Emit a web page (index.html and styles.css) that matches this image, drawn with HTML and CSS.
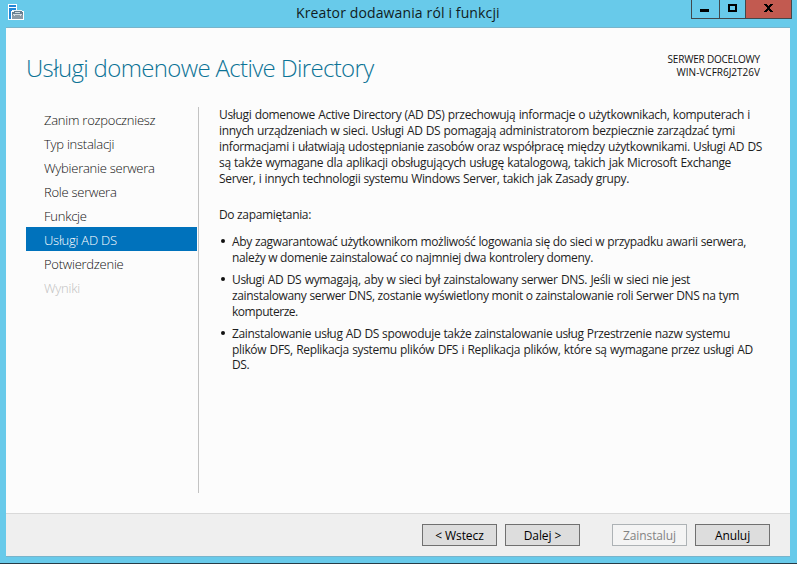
FILE: index.html
```
<!DOCTYPE html>
<html lang="pl">
<head>
<meta charset="utf-8">
<title>Kreator dodawania ról i funkcji</title>
<link rel="stylesheet" href="styles.css">
</head>
<body>
<div class="window">
  <header class="titlebar">
    <svg class="app-icon" width="16" height="16" viewBox="0 0 16 16" shape-rendering="crispEdges">
      <path fill="#fff" d="M0 0h9v6h5v1h2v9H0z"/>
      <path fill="#2287d8" d="M1 1h7v2H1zM1 4h7v2H4v1H3v8H1z"/>
      <path fill="#e8f3f8" d="M5 6h9v1H5z"/>
      <path fill="#687f91" d="M6 7h8v1H6zM4 8h11v7H4z"/>
      <path fill="#8b9aa6" d="M4 11h11v4H4z"/>
      <path fill="#d5dde2" d="M7 8h5v1H7zM5 10h9v1H5zM6 11h1v1H6zM12 11h1v1h-1z"/>
    </svg>
    <h1 class="caption">Kreator dodawania ról i funkcji</h1>
    <div class="controls">
      <svg class="control" width="28" height="18" viewBox="0 0 28 18" shape-rendering="crispEdges"><path d="M8 9h10v3H8z"/></svg>
      <svg class="control" width="26" height="18" viewBox="0 0 26 18" shape-rendering="crispEdges"><path fill-rule="evenodd" d="M8 4h10v8H8zM10 6v4h6V6z"/></svg>
      <svg class="control close" width="45" height="18" viewBox="0 0 45 18" shape-rendering="crispEdges"><path d="M18 4h3v1h1v1h1V5h1V4h3v1h-1v1h-1v1h-1v2h1v1h1v1h1v1h-3v-1h-1v-1h-1v1h-1v1h-3v-1h1v-1h1V9h1V7h-1V6h-1V5h-1z"/></svg>
    </div>
  </header>
  <main class="client">
    <div class="heading">
      <h2 class="page-title">Usługi domenowe Active Directory</h2>
      <div class="target">
        <div class="target-label">SERWER DOCELOWY</div>
        <div class="target-name">WIN-VCFR6J2T26V</div>
      </div>
    </div>
    <div class="body">
      <nav class="steps">
        <div class="step">Zanim rozpoczniesz</div>
        <div class="step">Typ instalacji</div>
        <div class="step">Wybieranie serwera</div>
        <div class="step">Role serwera</div>
        <div class="step">Funkcje</div>
        <div class="step active">Usługi AD DS</div>
        <div class="step">Potwierdzenie</div>
        <div class="step disabled">Wyniki</div>
      </nav>
      <section class="info">
        <p class="intro">
          <span class="line a1">Usługi domenowe Active Directory (AD DS) przechowują informacje o użytkownikach, komputerach i</span>
          <span class="line a2">innych urządzeniach w sieci. Usługi AD DS pomagają administratorom bezpiecznie zarządzać tymi</span>
          <span class="line a3">informacjami i ułatwiają udostępnianie zasobów oraz współpracę między użytkownikami. Usługi AD DS</span>
          <span class="line a4">są także wymagane dla aplikacji obsługujących usługę katalogową, takich jak Microsoft Exchange</span>
          <span class="line a5">Server, i innych technologii systemu Windows Server, takich jak Zasady grupy.</span>
        </p>
        <p class="remember"><span class="line a6">Do zapamiętania:</span></p>
        <ul class="notes">
          <li>
            <span class="line b1">Aby zagwarantować użytkownikom możliwość logowania się do sieci w przypadku awarii serwera,</span>
            <span class="line b2">należy w domenie zainstalować co najmniej dwa kontrolery domeny.</span>
          </li>
          <li>
            <span class="line b3">Usługi AD DS wymagają, aby w sieci był zainstalowany serwer DNS. Jeśli w sieci nie jest</span>
            <span class="line b4">zainstalowany serwer DNS, zostanie wyświetlony monit o zainstalowanie roli Serwer DNS na tym</span>
            <span class="line b5">komputerze.</span>
          </li>
          <li class="last">
            <span class="line b6">Zainstalowanie usług AD DS spowoduje także zainstalowanie usług Przestrzenie nazw systemu</span>
            <span class="line b7">plików DFS, Replikacja systemu plików DFS i Replikacja plików, które są wymagane przez usługi AD</span>
            <span class="line b8">DS.</span>
          </li>
        </ul>
      </section>
    </div>
    <footer class="actions">
      <button class="btn">&lt; Wstecz</button>
      <button class="btn">Dalej &gt;</button>
      <button class="btn install" disabled>Zainstaluj</button>
      <button class="btn">Anuluj</button>
    </footer>
  </main>
</div>
</body>
</html>
```
FILE: styles.css
```
* { box-sizing: border-box; }
html, body { margin: 0; height: 100%; overflow: hidden; }
body { font-family: "Open Sans", "Noto Sans", sans-serif; font-size: 12px; color: #1e1e1e; }
h1, h2, p, ul { margin: 0; padding: 0; font-weight: 400; }

.window {
  display: flex;
  flex-direction: column;
  height: 564px;
  padding: 0 7px 6px 6px;
  background: #68caea;
  border-bottom: 1px solid #263c46;
}
.titlebar { display: flex; height: 27px; flex: none; }
.app-icon { flex: none; margin: 4px 0 0 2px; }
.caption { flex: 1; font-size: 14px; line-height: 26px; color: #101c22; padding-left: 272px; white-space: nowrap; letter-spacing: 0.13px; }
.controls { display: flex; height: 19px; margin-right: -2px; border: 1px solid #41484c; border-top: 0; }
.control { display: block; border-right: 1px solid #41484c; }
.control:last-child { border-right: 0; }
.close { background: #c25a50; }

.client {
  display: flex;
  flex-direction: column;
  flex: 1;
  background: #fcfcfc;
  border-top: 1px solid #78b4cb;
  border-bottom: 1px solid #78b4cb;
}
.heading { display: flex; justify-content: space-between; height: 79px; padding: 22px 30px 0 20px; }
.page-title { font-size: 24px; font-weight: 300; line-height: 36px; color: #0c7396; white-space: nowrap; letter-spacing: -0.65px; }
.target { font-size: 10px; line-height: 13px; text-align: right; padding-top: 3px; color: #111; white-space: nowrap; }
.target-label { letter-spacing: -0.2px; }
.target-name { letter-spacing: 0; }

.body { display: flex; height: 386px; padding-left: 20px; }
.steps { width: 173px; border-right: 1px solid #c3c3c3; padding-right: 1px; }
.step { height: 24px; line-height: 26px; padding-left: 18px; font-size: 13px; font-weight: 300; color: #111; white-space: nowrap; letter-spacing: -0.25px; }
.active { background: #0072bc; color: #fff; }
.disabled { color: #c0c0c0; }

.info { padding-left: 20px; line-height: 16px; }
.line { display: block; white-space: nowrap; text-align-last: justify; letter-spacing: -0.34px; }
.remember { margin-top: 20px; }
.notes { list-style: none; margin-top: 11px; }
.notes li { position: relative; padding-left: 13px; margin-bottom: 6px; }
.notes li::before { content: ""; position: absolute; left: 2px; top: 5px; width: 4px; height: 4px; border-radius: 50%; background: #111; }
.last { line-height: 15.6px; }

.a1 { width: 531px; }
.a2 { width: 516px; }
.a3 { width: 543px; }
.a4 { width: 512px; }
.a5 { width: 410px; }
.a6 { width: 92px; }
.b1 { width: 514px; }
.b2 { width: 361px; }
.b3 { width: 458px; }
.b4 { width: 507px; }
.b5 { width: 66px; }
.b6 { width: 498px; }
.b7 { width: 521px; }
.b8 { width: 17px; }

.b5, .b8 { letter-spacing: -0.45px; }

.actions {
  display: flex;
  justify-content: flex-end;
  gap: 8px;
  margin-top: auto;
  height: 43px;
  padding: 10px 20px 0 0;
  background: #efefef;
  border-top: 1px solid #d9d9d9;
}
.btn {
  width: 75px;
  height: 22px;
  padding: 2px 0 0;
  border: 1px solid #707070;
  background: #ddd;
  font: 12px/18px "Open Sans", "Noto Sans", sans-serif;
  letter-spacing: -0.1px;
  color: #000;
}
.install { margin-left: 24px; border-color: #adb2b5; background: #f4f4f4; color: #838383; }
```
